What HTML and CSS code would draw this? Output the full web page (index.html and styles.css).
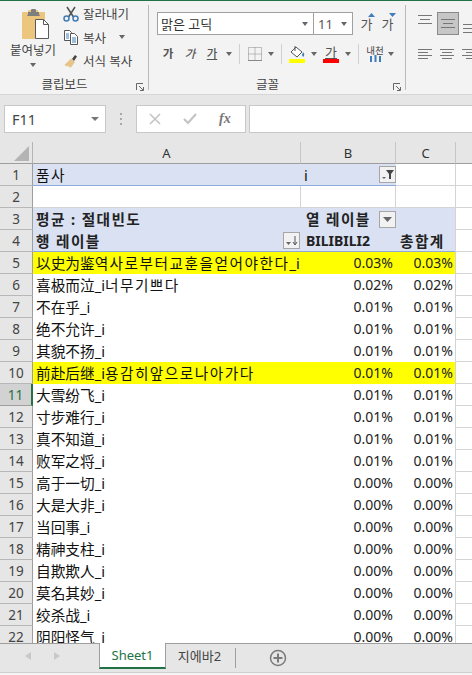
FILE: index.html
```html
<!DOCTYPE html>
<html lang="ko">
<head>
<meta charset="utf-8">
<title>Excel</title>
<link rel="stylesheet" href="styles.css">
</head>
<body>
<div class="app">
  <header class="ribbon">
    <section class="group clip">
      <div class="group-body clip-body">
        <div class="paste">
          <svg class="paste-icon" width="29" height="30" viewBox="0 0 29 30"><path d="M2 3h5V1h10v2h7v27H2q-1 0-1-1V4q0-1 1-1z" fill="#edc67e"/><path d="M7 5V3h3V1q0-1 1-1h3q1 0 1 1v2h3v2l1 2H6z" fill="#7f7f7f"/><path d="M14.500 10.500h8l5 5v14h-13z" fill="#fff" stroke="#5a5a5a"/><path d="M22.500 10.500v5h5" fill="none" stroke="#5a5a5a"/></svg>
          <span class="paste-label">붙여넣기</span>
          <span class="caret paste-caret"></span>
        </div>
        <div class="clip-list">
          <div class="clip-row"><svg width="16" height="16" viewBox="0 0 16 16"><path d="M4 1l6.500 10M12 1L5.500 11" stroke="#555" stroke-width="1.600" fill="none"/><circle cx="3.500" cy="12.500" r="2.500" fill="none" stroke="#3f7cb8" stroke-width="1.500"/><circle cx="12.500" cy="12.500" r="2.500" fill="none" stroke="#3f7cb8" stroke-width="1.500"/></svg><span>잘라내기</span></div>
          <div class="clip-row"><svg width="16" height="16" viewBox="0 0 16 16"><path d="M1.500 1.500h5l2 2v8h-7z" fill="#fff" stroke="#555"/><path d="M7.500 4.500h4l3 3v8h-7z" fill="#fff" stroke="#555"/><path d="M3 5h3M3 7h3M3 9h3M9 9h4M9 11h4M9 13h4" stroke="#3f7cb8"/></svg><span>복사</span><span class="caret copy-caret"></span></div>
          <div class="clip-row"><svg width="16" height="16" viewBox="0 0 16 16"><path d="M9 6l3-4 2 1.500-3 4.500z" fill="#444"/><path d="M8 5.500l4 3.500-4 5.500-2-.5-1-1-1.500.5-2-2 2-1.500z" fill="#e7c489"/></svg><span>서식 복사</span></div>
        </div>
      </div>
      <div class="group-foot"><span></span><span class="group-title">클립보드</span><svg class="launcher" width="8" height="8" viewBox="0 0 8 8"><path d="M.5 7V.5H7M3 3l4 4M4 7.500h3.500V4" fill="none" stroke="#666"/></svg></div>
    </section>

    <section class="group font">
      <div class="group-body font-body">
        <div class="font-row-a">
          <div class="select select-name"><span>맑은 고딕</span><span class="caret"></span></div>
          <div class="select select-size"><span>11</span><span class="caret"></span></div>
          <span class="grow">가<svg class="grow-mark" width="7" height="4" viewBox="0 0 7 4"><path d="M3.500 0L7 4H0z" fill="#3f7cb8"/></svg></span>
          <span class="grow">가<svg class="grow-mark" width="7" height="4" viewBox="0 0 7 4"><path d="M3.500 4L7 0H0z" fill="#3f7cb8"/></svg></span>
        </div>
        <div class="font-row-b">
          <span class="ft ft-b">가</span>
          <span class="ft ft-i">가</span>
          <span class="ft ft-u">가</span>
          <span class="ft-caret"><span class="caret"></span></span>
          <span class="vsep"></span>
          <span class="ft ft-border"><svg width="14" height="14" viewBox="0 0 14 14"><path d="M.5.500h13v13H.5zM7 .5v13M.5 7h13" fill="none" stroke="#888" stroke-dasharray="1 1"/><path d="M0 13.500h14" stroke="#888"/></svg></span>
          <span class="ft-caret"><span class="caret"></span></span>
          <span class="vsep"></span>
          <span class="ft ft-fill"><svg width="16" height="12" viewBox="0 0 16 12"><path d="M7 1l6 5-5 5-6-5z" fill="#fff" stroke="#555"/><path d="M6 0v5" stroke="#555"/><path d="M14 6q2 2 1 4t-2-1z" fill="#3f7cb8"/></svg><span class="swatch swatch-y"></span></span>
          <span class="ft-caret"><span class="caret"></span></span>
          <span class="ft ft-color"><span class="ft-letter">가</span><span class="swatch swatch-r"></span></span>
          <span class="ft-caret"><span class="caret"></span></span>
          <span class="vsep"></span>
          <span class="ft ft-phon"><span class="phon-text">내천</span><svg width="11" height="7" viewBox="0 0 11 7"><path d="M1 7V1M5.500 7V0M10 7V1" stroke="#3f7cb8" stroke-width="2"/></svg></span>
          <span class="ft-caret"><span class="caret"></span></span>
        </div>
      </div>
      <div class="group-foot"><span></span><span class="group-title">글꼴</span><svg class="launcher" width="8" height="8" viewBox="0 0 8 8"><path d="M.5 7V.5H7M3 3l4 4M4 7.500h3.500V4" fill="none" stroke="#666"/></svg></div>
    </section>

    <section class="align">
      <div class="align-row-a">
        <span class="al"><i class="l14"></i><i class="l10"></i><i class="l14"></i></span>
        <span class="al al-on"><i class="l14"></i><i class="l10"></i><i class="l14"></i></span>
        <span class="al al-low"><i class="l14"></i><i class="l14"></i><i class="l14"></i></span>
      </div>
      <div class="align-row-b">
        <span class="bl bl-left"><i class="l14"></i><i class="l10"></i><i class="l14"></i><i class="l10"></i></span>
        <span class="bl bl-center"><i class="l14"></i><i class="l10"></i><i class="l14"></i><i class="l10"></i></span>
        <span class="bl bl-right"><i class="l14"></i><i class="l10"></i><i class="l14"></i><i class="l10"></i></span>
      </div>
    </section>
  </header>

  <div class="formula">
    <div class="namebox"><span>F11</span><span class="caret caret-dark"></span></div>
    <div class="dots"><i></i><i></i><i></i></div>
    <div class="fbuttons">
      <svg width="12" height="12" viewBox="0 0 12 12"><path d="M1 1l10 10M11 1L1 11" stroke="#c4c4c4" stroke-width="1.600"/></svg>
      <svg width="14" height="12" viewBox="0 0 14 12"><path d="M1 6l4 4 8-9" stroke="#c4c4c4" stroke-width="2.200" fill="none"/></svg>
      <span class="fx">fx</span>
    </div>
    <div class="finput"></div>
  </div>

  <main class="sheet">
    <div class="corner"><svg width="15" height="15" viewBox="0 0 15 15"><path d="M15 0v15H0z" fill="#b4b4b4"/></svg></div>
    <div class="ch">A</div><div class="ch">B</div><div class="ch">C</div><div class="ch ch-end"></div>

    <div class="rh">1</div><div class="c hb1"><span class="ko">품사</span></div><div class="c hb1 split"><span>i</span><span class="fbtn"><svg width="12" height="10" viewBox="0 0 12 10"><path d="M4 0h8L9 4v5H7V4z" fill="#444"/><path d="M0 7h4L2 9z" fill="#666"/></svg></span></div><div class="c grid-c"></div><div class="c grid-d"></div>
    <div class="rh">2</div><div class="c grid-c"></div><div class="c grid-c"></div><div class="c grid-c"></div><div class="c grid-d"></div>
    <div class="rh">3</div><div class="c h3 bold">평균 : 절대빈도</div><div class="c h3 bold split b-pad"><span>열 레이블</span><span class="fbtn"><svg width="9" height="5" viewBox="0 0 9 5"><path d="M0 0h9L4.500 5z" fill="#666"/></svg></span></div><div class="c h3"></div><div class="c grid-d"></div>
    <div class="rh">4</div><div class="c h4 bold split"><span>행 레이블</span><span class="fbtn fbtn-sort"><svg width="12" height="10" viewBox="0 0 12 10"><path d="M0 6h5L2.500 9z" fill="#666"/><path d="M9 0v8M7 6l2 3 2-3" stroke="#555" fill="none"/></svg></span></div><div class="c h4 bold-latin b-pad">BILIBILI2</div><div class="c h4 bold c-pad">총합계</div><div class="c grid-d"></div>

    <div class="rh">5</div><div class="c y"><span>以史为鉴<span class="ko">역사로부터교훈을얻어야한다</span>_i</span></div><div class="c y n">0.03%</div><div class="c y n">0.03%</div><div class="c grid-d"></div>
    <div class="rh">6</div><div class="c"><span>喜极而泣_i<span class="ko">너무기쁘다</span></span></div><div class="c n">0.02%</div><div class="c n">0.02%</div><div class="c grid-d"></div>
    <div class="rh">7</div><div class="c">不在乎_i</div><div class="c n">0.01%</div><div class="c n">0.01%</div><div class="c grid-d"></div>
    <div class="rh">8</div><div class="c">绝不允许_i</div><div class="c n">0.01%</div><div class="c n">0.01%</div><div class="c grid-d"></div>
    <div class="rh">9</div><div class="c">其貌不扬_i</div><div class="c n">0.01%</div><div class="c n">0.01%</div><div class="c grid-d"></div>
    <div class="rh">10</div><div class="c y"><span>前赴后继_i<span class="ko">용감히앞으로나아가다</span></span></div><div class="c y n">0.01%</div><div class="c y n">0.01%</div><div class="c grid-d"></div>
    <div class="rh rh-on">11</div><div class="c">大雪纷飞_i</div><div class="c n">0.01%</div><div class="c n">0.01%</div><div class="c grid-d"></div>
    <div class="rh">12</div><div class="c">寸步难行_i</div><div class="c n">0.01%</div><div class="c n">0.01%</div><div class="c grid-d"></div>
    <div class="rh">13</div><div class="c">真不知道_i</div><div class="c n">0.01%</div><div class="c n">0.01%</div><div class="c grid-d"></div>
    <div class="rh">14</div><div class="c">败军之将_i</div><div class="c n">0.01%</div><div class="c n">0.01%</div><div class="c grid-d"></div>
    <div class="rh">15</div><div class="c">高于一切_i</div><div class="c n">0.00%</div><div class="c n">0.00%</div><div class="c grid-d"></div>
    <div class="rh">16</div><div class="c">大是大非_i</div><div class="c n">0.00%</div><div class="c n">0.00%</div><div class="c grid-d"></div>
    <div class="rh">17</div><div class="c">当回事_i</div><div class="c n">0.00%</div><div class="c n">0.00%</div><div class="c grid-d"></div>
    <div class="rh">18</div><div class="c">精神支柱_i</div><div class="c n">0.00%</div><div class="c n">0.00%</div><div class="c grid-d"></div>
    <div class="rh">19</div><div class="c">自欺欺人_i</div><div class="c n">0.00%</div><div class="c n">0.00%</div><div class="c grid-d"></div>
    <div class="rh">20</div><div class="c">莫名其妙_i</div><div class="c n">0.00%</div><div class="c n">0.00%</div><div class="c grid-d"></div>
    <div class="rh">21</div><div class="c">绞杀战_i</div><div class="c n">0.00%</div><div class="c n">0.00%</div><div class="c grid-d"></div>
    <div class="rh">22</div><div class="c">阴阳怪气_i</div><div class="c n">0.00%</div><div class="c n">0.00%</div><div class="c grid-d"></div>
  </main>

  <footer class="tabs">
    <div class="nav">
      <svg width="6" height="8" viewBox="0 0 6 8"><path d="M6 0v8L0 4z" fill="#c8c8c8"/></svg>
      <svg width="6" height="8" viewBox="0 0 6 8"><path d="M0 0v8l6-4z" fill="#c8c8c8"/></svg>
    </div>
    <div class="tab tab-on">Sheet1</div>
    <div class="tab">지에바2</div>
    <span class="tab-sep"></span>
    <svg class="add" width="18" height="18" viewBox="0 0 18 18"><circle cx="9" cy="9" r="7.500" fill="none" stroke="#7a7a7a" stroke-width="1.500"/><path d="M9 4.500v9M4.500 9h9" stroke="#7a7a7a" stroke-width="2"/></svg>
  </footer>
  <div class="status"></div>
</div>
</body>
</html>
```

FILE: styles.css
```css
* { box-sizing: border-box; }
html, body { margin: 0; padding: 0; }
body {
  width: 472px;
  height: 675px;
  overflow: hidden;
  background: #e6e6e6;
  font-family: "Noto Sans", "Noto Sans CJK KR", "Noto Sans CJK SC", sans-serif;
  color: #222;
}
.app { display: flex; flex-direction: column; width: 472px; height: 675px; }

/* ribbon */
.ribbon {
  display: flex;
  flex: none;
  height: 95px;
  background: #f3f3f3;
  border-top: 1px solid #217346;
  border-bottom: 1px solid #d6d6d6;
  padding-top: 4px;
  padding-bottom: 4px;
  font-size: 12.500px;
  color: #444;
}
.group { display: flex; flex-direction: column; flex: none; border-right: 1px solid #b9b9b9; padding-right: 4px; }
.group-body { flex: 1; }
.group-foot { display: grid; grid-template-columns: 1fr auto 1fr; align-items: center; height: 16px; }
.group-title { font-size: 12.500px; color: #444; line-height: 16px; margin: 3px 15px 0 0; }
.launcher { justify-self: end; margin-top: 6px; }
.caret { display: inline-block; width: 0; height: 0; border-left: 3.500px solid transparent; border-right: 3.500px solid transparent; border-top: 4px solid #666; }
.caret-dark { border-top-color: #777; border-left-width: 4px; border-right-width: 4px; }

.clip { width: 149px; }
.clip-body { display: flex; padding-left: 10px; gap: 7px; }
.paste { display: flex; flex-direction: column; align-items: center; width: 46px; padding-top: 4px; }
.paste-icon { margin-left: 4px; }
.paste-label { line-height: 15px; margin-top: 4px; white-space: nowrap; }
.paste-caret { margin-top: 5px; }
.clip-list { display: flex; flex-direction: column; margin-top: -3px; }
.clip-row { display: flex; align-items: center; gap: 4px; height: 23.500px; white-space: nowrap; }
.copy-caret { margin-left: 9px; }

.font { width: 257px; }
.font-body { padding-left: 8px; display: flex; flex-direction: column; }
.font-row-a { display: flex; align-items: center; height: 23px; margin-top: 7px; }
.select { display: flex; align-items: center; justify-content: space-between; height: 23px; background: #fff; border: 1px solid #a0a0a0; color: #333; font-size: 13px; padding: 0 5px 0 3px; }
.select-name { width: 157px; }
.select-size { width: 40px; margin-left: -1px; padding-left: 4px; color: #555; }
.grow { position: relative; display: flex; justify-content: center; width: 21px; font-size: 13px; color: #555; }
.grow:first-of-type { margin-left: 3px; }
.grow-mark { position: absolute; right: 2px; top: -1px; }
.font-row-b { display: flex; align-items: center; height: 22px; margin-top: 8px; }
.ft { display: flex; flex-direction: column; align-items: center; justify-content: center; width: 22px; height: 22px; font-size: 11.500px; font-weight: 500; color: #555; line-height: 12px; flex: none; }
.ft-b { font-weight: 700; }
.ft-i { font-style: italic; }
.ft-u { text-decoration: underline; }
.ft-caret { display: flex; justify-content: center; width: 12px; margin-left: 2px; flex: none; }
.ft-b + .ft-caret, .ft-u + .ft-caret { margin-left: 0; }
.vsep { width: 1px; height: 20px; background: #d0d0d0; margin: 0 4px; flex: none; }
.ft-border { width: 17px; margin-left: 2px; }
.ft-fill { width: 18px; margin-left: 2px; }
.ft-color { width: 18px; margin-left: 2px; }
.ft-letter { font-size: 13px; font-weight: 400; text-decoration: underline; line-height: 13px; }
.swatch { display: block; width: 16px; height: 4px; margin-top: 1px; }
.swatch-y { background: #ffff00; }
.swatch-r { background: #ff0000; margin-top: 0; }
.ft-phon { width: 16px; margin-left: 4px; }
.phon-text { font-size: 9.500px; font-weight: 400; line-height: 9px; color: #444; white-space: nowrap; }

.align { display: flex; flex-direction: column; flex: 1; padding-left: 12px; overflow: hidden; }
.align i { display: block; height: 1px; background: #777; }
.align .l14 { width: 14px; }
.align .l10 { width: 10px; }
.align-row-a { display: flex; align-items: flex-start; margin-top: 7px; }
.al { display: flex; flex-direction: column; align-items: center; gap: 3px; flex: none; width: 14px; padding-top: 3px; }
.al-on { width: 22px; height: 23px; margin-left: 5px; padding-top: 6px; background: #c6c6c6; border: 1px solid #8a8a8a; }
.al-low { margin-left: 4px; padding-top: 12px; }
.align-row-b { display: flex; gap: 8px; margin-top: 14px; }
.bl { display: flex; flex-direction: column; gap: 2px; width: 14px; flex: none; }
.bl-center { align-items: center; }
.bl-right { align-items: flex-end; }

/* formula bar */
.formula { display: flex; align-items: center; flex: none; height: 47px; padding: 9px 0 9px 4px; background: #e6e6e6; }
.namebox { display: flex; align-items: center; justify-content: space-between; width: 102px; height: 28px; background: #fff; border: 1px solid #c8c8c8; padding: 0 6px 0 7px; font-size: 14.500px; color: #444; }
.dots { display: flex; flex-direction: column; gap: 3px; width: 30px; align-items: center; }
.dots i { display: block; width: 2px; height: 2px; background: #a8a8a8; }
.fbuttons { display: flex; align-items: center; gap: 22px; width: 110px; height: 28px; background: #fff; border: 1px solid #c8c8c8; padding: 0 0 0 12px; }
.fx { font-family: "Liberation Serif", serif; font-style: italic; font-weight: 700; font-size: 14px; color: #777; }
.finput { flex: 1; height: 28px; margin-left: 3px; background: #fff; border: 1px solid #c8c8c8; border-right: 0; }

/* sheet */
.sheet {
  display: grid;
  flex: none;
  height: 502px;
  overflow: hidden;
  grid-template-columns: 33px 268px 95px 60px 16px;
  grid-auto-rows: 22px;
  background: #fff;
  font-size: 14.670px;
  color: #111;
  border-bottom: 1px solid #9e9e9e;
}
.corner { display: flex; align-items: flex-end; justify-content: flex-end; padding: 0 3px 2px 0; background: #e6e6e6; border-right: 1px solid #b4b4b4; border-bottom: 1px solid #9e9e9e; }
.ch { display: flex; align-items: center; justify-content: center; background: #e6e6e6; border-right: 1px solid #c6c6c6; border-bottom: 1px solid #9e9e9e; font-size: 13px; color: #333; }
.ch-end { border-right: 0; }
.rh { display: flex; align-items: center; justify-content: center; background: #e6e6e6; border-right: 1px solid #9e9e9e; border-bottom: 1px solid #b8b8b8; font-size: 13.500px; color: #444; }
.rh-on { background: #d2d2d2; border-right: 2px solid #217346; color: #217346; border-bottom-color: #9e9e9e; }
.c { display: flex; align-items: center; padding: 0 3px; white-space: nowrap; min-width: 0; line-height: 22px; }
.ko { letter-spacing: 1.500px; }
.split { justify-content: space-between; padding-right: 0; }
.n { justify-content: flex-end; font-size: 14px; color: #222; padding-right: 3px; }
.y { background: #ffff00; }
.hb1 { background: #d9e1f2; border-bottom: 1px solid #8ea9db; }
.h3 { background: #d9e1f2; }
.h4 { background: #d9e1f2; border-bottom: 1px solid #8ea9db; }
.bold { font-weight: 700; font-size: 14.670px; letter-spacing: 1.400px; color: #222; }
.bold-latin { font-weight: 700; font-size: 14px; color: #222; }
.b-pad { padding-left: 5px; }
.c-pad { padding-left: 4px; }
.hb1.split { padding-right: 0; }
.h4.split { padding-right: 1px; }
.grid-c { border-right: 1px solid #d4d4d4; border-bottom: 1px solid #d4d4d4; }
.grid-d { border-left: 1px solid #d4d4d4; border-bottom: 1px solid #d4d4d4; margin-left: -1px; }
.fbtn { display: flex; align-items: center; justify-content: center; width: 17px; height: 17px; flex: none; background: #f2f2f2; border: 1px solid #a6a6a6; font-size: 0; }

/* tabs */
.tabs { display: flex; align-items: flex-start; flex: none; height: 28px; background: #e6e6e6; font-size: 13px; color: #444; }
.nav { display: flex; align-items: center; gap: 23px; width: 99px; height: 24px; padding-left: 25px; }
.tab { display: flex; align-items: center; justify-content: center; height: 24px; width: 67px; margin-top: -1px; white-space: nowrap; }
.tab-on { background: #fff; border-left: 1px solid #9e9e9e; border-right: 1px solid #9e9e9e; border-bottom: 2px solid #217346; color: #217346; height: 26px; }
.tab-sep { width: 1px; height: 20px; margin: 4px 0 0 2px; background: #9e9e9e; }
.add { margin: 5px 0 0 33px; }
.status { flex: 1; background: #f3f3f3; border-top: 1px solid #cfcfcf; }
```
